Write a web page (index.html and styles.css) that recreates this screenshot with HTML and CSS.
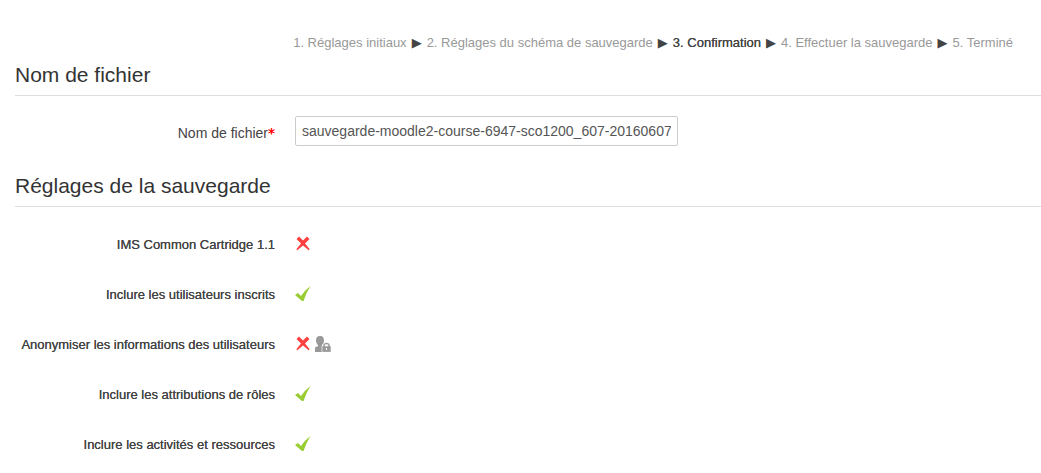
FILE: index.html
```html
<!DOCTYPE html>
<html lang="fr">
<head>
<meta charset="utf-8">
<title>Sauvegarde : confirmation</title>
<link rel="stylesheet" href="styles.css">
</head>
<body>
<svg class="sprites" aria-hidden="true">
  <symbol id="no" viewBox="0 0 16 16">
    <path fill="#ff4040" d="M1.500 3 4 .5 8 4.500 12 .5 14.500 3 10 7.500 14.500 13 14 14.500 8 9.500 2 14.500 1.500 13 6 7.500Z"/>
  </symbol>
  <symbol id="yes" viewBox="0 0 16 16">
    <path fill="#99cc33" d="M0 9 3 7 6 10Q10 4 15.500 0 11 7 8.500 15L7 15Z"/>
  </symbol>
  <symbol id="locked" viewBox="0 0 16 16">
    <path fill="#999" d="M5 0C8 0 9 2 9 4.500 9 6.500 8 8 7 9V10L8 11V16H0V12Q0 11 1 11L3 10V9C2 8 1 6.500 1 4.500 1 2 2 0 5 0Z"/>
    <path fill="#999" stroke="#fff" stroke-width=".6" fill-rule="evenodd" d="M7 10H8V9.500C8 7.500 9.500 6.500 11.500 6.500S15 7.500 15 9.500V10H16V16.300H7ZM10 10H13V9.500C13 8.800 12.500 8.500 11.500 8.500S10 8.800 10 9.500Z"/>
    <path fill="#fff" d="M11 12H12V14H11Z"/>
  </symbol>
</svg>
<main class="page">
  <nav class="steps" aria-label="Étapes de la sauvegarde">
    <a href="#initial">1. Réglages initiaux</a><span class="arrow">▶</span>
    <a href="#schema">2. Réglages du schéma de sauvegarde</a><span class="arrow">▶</span>
    <span class="current" aria-current="step">3. Confirmation</span><span class="arrow">▶</span>
    <span>4. Effectuer la sauvegarde</span><span class="arrow">▶</span>
    <span>5. Terminé</span>
  </nav>
  <form>
    <section>
      <h2>Nom de fichier</h2>
      <div class="row file-row">
        <label class="label" for="filename">Nom de fichier<span class="required">*</span></label>
        <input class="filename" id="filename" type="text" required value="sauvegarde-moodle2-course-6947-sco1200_607-20160607">
      </div>
    </section>
    <section>
      <h2>Réglages de la sauvegarde</h2>
      <dl class="settings">
        <div class="row"><dt class="label setting">IMS Common Cartridge 1.1</dt><dd><svg role="img" aria-label="Non"><use href="#no"/></svg></dd></div>
        <div class="row"><dt class="label setting">Inclure les utilisateurs inscrits</dt><dd><svg role="img" aria-label="Oui"><use href="#yes"/></svg></dd></div>
        <div class="row"><dt class="label setting">Anonymiser les informations des utilisateurs</dt><dd><svg role="img" aria-label="Non"><use href="#no"/></svg><svg role="img" aria-label="Verrouillé"><use href="#locked"/></svg></dd></div>
        <div class="row"><dt class="label setting">Inclure les attributions de rôles</dt><dd><svg role="img" aria-label="Oui"><use href="#yes"/></svg></dd></div>
        <div class="row"><dt class="label setting">Inclure les activités et ressources</dt><dd><svg role="img" aria-label="Oui"><use href="#yes"/></svg></dd></div>
      </dl>
    </section>
  </form>
</main>
</body>
</html>
```
FILE: styles.css
```css
body {
  margin: 0;
  background: #fff;
  color: #444;
  font: 13px/20px "Liberation Sans", Arial, sans-serif;
}
.sprites { display: none; }
.page { padding: 33px 0 0 15px; }
.steps {
  display: flex;
  justify-content: flex-end;
  gap: 5px;
  margin-bottom: 2px;
  padding-right: 28px;
  color: #999;
}
.steps a { color: inherit; text-decoration: none; }
.arrow { color: #444; font-family: "DejaVu Sans", sans-serif; }
.current, .setting {
  color: #444;
  text-shadow: 0 0 0 #444;
}
h2 {
  margin: 0;
  border-bottom: 1px solid #ddd;
  color: #333;
  font-size: 21px;
  font-weight: 400;
  line-height: 40px;
}
.row {
  display: grid;
  grid-template-columns: 260px 1fr;
  column-gap: 20px;
  align-items: center;
}
.label { text-align: right; }
.file-row { padding: 20px 0; font-size: 14px; }
.file-row .label { padding-top: 4px; }
.required {
  color: #f00;
  font-family: "DejaVu Sans", sans-serif;
  text-shadow: 0 0 0 #f00;
}
.filename {
  box-sizing: border-box;
  width: 383px;
  height: 30px;
  padding: 4px 6px;
  border: 1px solid #ccc;
  border-radius: 2px;
  background: #fff;
  color: #555;
  font: inherit;
}
.settings {
  display: grid;
  gap: 30px;
  margin: 0;
  padding: 28px 0 18px;
}
dd { display: flex; gap: 4px; margin: 0; padding-bottom: 2px; }
dd svg { width: 16px; height: 16px; }
```
